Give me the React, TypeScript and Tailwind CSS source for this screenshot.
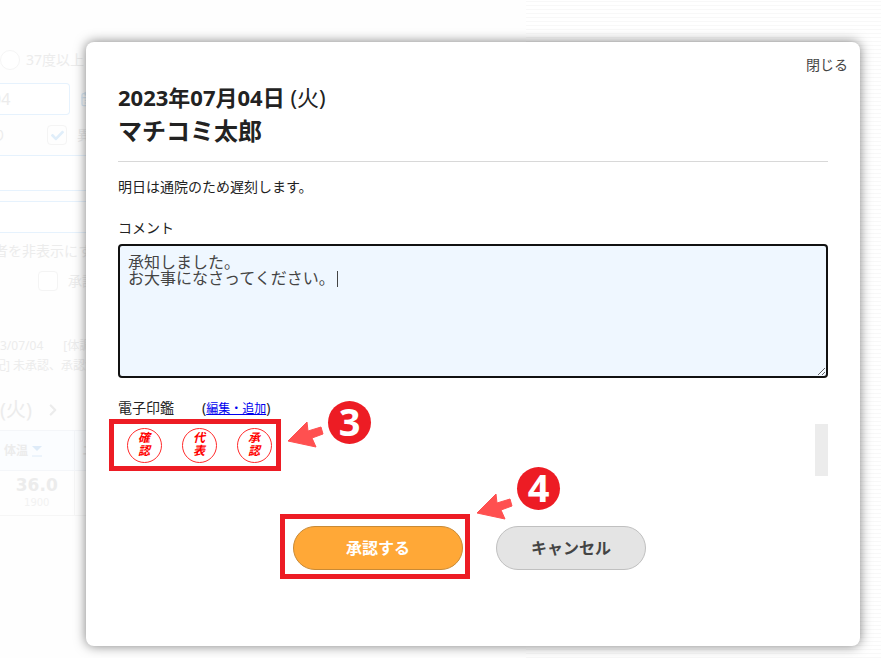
import { useEffect, useRef } from "react";
import { CalendarDays, ChevronRight } from "lucide-react";
import { FaCheck } from "react-icons/fa";

const stamps = ["確認", "代表", "承認"];

function PageBehind() {
    return (
        <div
            inert
            className="min-h-screen bg-[repeating-linear-gradient(to_bottom,#fff_0px,#fff_1px,#f8f8f8_1px,#f8f8f8_2px,#fff_2px,#fff_4px)]"
        >
            <div className="min-h-screen w-[526px] max-w-full bg-[#fefefe] pt-12 text-sm text-[#ececec]">
                <div className="flex h-6 items-center gap-1.5">
                    <span className="size-5 rounded-full border border-[#f5f5f5] bg-white" />
                    <span>37度以上</span>
                </div>
                <div className="mt-[11px] flex items-center gap-2.5">
                    <div className="flex h-8 w-[70px] items-center rounded-r-sm border border-l-0 border-[#e6f2fd] bg-white text-base">
                        <span className="-ml-2">04</span>
                    </div>
                    <CalendarDays size={16} className="text-[#dcebf8]" />
                </div>
                <div className="mt-2 flex h-6 items-center">
                    <span className="-ml-2 w-[55px]">り</span>
                    <span className="mr-2.5 flex size-5 items-center justify-center rounded-sm border border-[#f4f4f4]">
                        <FaCheck size={13} className="text-[#e0eefa]" />
                    </span>
                    <span>異常</span>
                </div>
                <div className="mt-2 h-9 border-y border-[#e6f2fd] bg-white" />
                <div className="mt-2.5 h-8 border-y border-[#e6f2fd] bg-white" />
                <p className="mt-1.5 -ml-1.5 h-6 leading-6">者を非表示にする</p>
                <div className="mt-1.5 flex h-6 items-center gap-2.5 pl-[38px]">
                    <span className="size-5 rounded-sm border border-[#f4f4f4] bg-white" />
                    <span>承認済</span>
                </div>
                <p className="mt-[43px] flex gap-5 text-xs leading-5">
                    <span>3/07/04</span>
                    <span>[体調]</span>
                </p>
                <p className="-ml-1.5 text-xs leading-5">記] 未承認、承認済</p>
                <div className="mt-[18px] flex h-8 items-center gap-3 text-xl">
                    <span>(火)</span>
                    <ChevronRight size={18} strokeWidth={3} />
                </div>
                <table className="mt-1 w-full table-fixed border-collapse">
                    <thead>
                        <tr className="h-10 bg-[#fbfdff] text-xs">
                            <th className="w-[74px] border border-l-0 border-[#f4f6f9]">
                                <span className="flex items-center gap-1 pl-1">
                                    体温
                                    <svg width="10" height="12" viewBox="0 0 10 12" className="text-[#deebf8]">
                                        <path d="M0 1h10L5 6z" fill="currentColor" />
                                        <path d="M0 11h10" stroke="currentColor" />
                                    </svg>
                                </span>
                            </th>
                            <th className="border border-[#f4f6f9] pl-2 text-left">エ</th>
                        </tr>
                    </thead>
                    <tbody>
                        <tr className="h-[45px] text-center">
                            <td className="border border-l-0 border-[#f6f6f6] font-['DejaVu_Sans',sans-serif]">
                                <div className="text-[17px] leading-5 font-bold">36.0</div>
                                <div className="text-[10px] leading-4 text-[#f2f2f2]">1900</div>
                            </td>
                            <td className="border border-[#f6f6f6]" />
                        </tr>
                    </tbody>
                </table>
            </div>
        </div>
    );
}

function StepBadge({ step, className, arrowClassName }: { step: number; className: string; arrowClassName: string }) {
    return (
        <div className={`pointer-events-none absolute flex items-start ${className}`}>
            <svg width="37" height="28" viewBox="0 0 37 28" className={arrowClassName}>
                <path
                    d="M1 20L20 1l1 9 13-4 2 7-11 4 4 9z"
                    fill="#ff5050"
                    stroke="#ff5050"
                    strokeLinejoin="round"
                />
            </svg>
            <span className="ml-1 flex size-[43px] items-center justify-center rounded-full bg-[#ed1c24] pb-1 text-[38px] leading-none font-bold text-white">
                {step}
            </span>
        </div>
    );
}

export default function App() {
    const commentRef = useRef<HTMLTextAreaElement>(null);

    useEffect(() => {
        const el = commentRef.current;
        if (!el) return;
        el.focus();
        el.setSelectionRange(el.value.length, el.value.length);
    }, []);

    return (
        <div className="relative overflow-hidden font-['Noto_Sans','Noto_Sans_CJK_JP',sans-serif] text-[#222]">
            <PageBehind />

            <div className="absolute inset-0 pt-[42px] pr-[21px] pb-3 pl-[86px]">
                <div
                    role="dialog"
                    aria-labelledby="dialog-title"
                    className="flex h-full flex-col rounded-lg bg-white shadow-[0_0_12px_rgba(0,0,0,0.5)]"
                >
                    <div className="flex justify-end pt-[13px] pr-3">
                        <button type="button" className="text-sm text-[#444]">
                            閉じる
                        </button>
                    </div>

                    <div className="px-8 pt-1.5">
                        <header id="dialog-title" className="border-b border-[#d8d8d8] pb-3.5">
                            <p className="text-[22px] leading-8">
                                <span className="font-bold">2023年07月04日</span> (火)
                            </p>
                            <h1 className="mt-0.5 text-2xl leading-8 font-bold">マチコミ太郎</h1>
                        </header>

                        <p className="mt-[15px] text-sm">明日は通院のため遅刻します。</p>

                        <label htmlFor="comment" className="mt-[21px] block text-sm">
                            コメント
                        </label>
                        <div className="relative mt-1.5">
                            <textarea
                                id="comment"
                                ref={commentRef}
                                defaultValue={"承知しました。\nお大事になさってください。"}
                                className="block h-[134px] w-full rounded border-2 border-[#111] bg-[#eff7ff] p-2 text-base leading-4 text-[#444] caret-transparent outline-none"
                            />
                            <span className="pointer-events-none absolute top-[27px] left-[219px] h-4 w-px bg-[#444]" />
                        </div>

                        <div className="mt-5 flex items-center gap-7 text-sm">
                            <span>電子印鑑</span>
                            <span>
                                (
                                <a href="#edit" className="text-xs text-[#0000ee] underline">
                                    編集・追加
                                </a>
                                )
                            </span>
                        </div>

                        <div className="flex items-start justify-between pt-px">
                            <div className="relative -ml-[9px] flex h-[52px] w-[172px] items-center justify-center gap-5 border-5 border-[#ed1c24] pl-2">
                                {stamps.map((stamp) => (
                                    <button
                                        key={stamp}
                                        type="button"
                                        className="flex size-[35px] shrink-0 items-center justify-center rounded-full border border-[#ff2a2a] text-[#f00]"
                                    >
                                        <span className="w-3 font-['Liberation_Serif','Noto_Sans_CJK_JP',serif] text-xs leading-[13px] font-bold break-all italic">
                                            {stamp}
                                        </span>
                                    </button>
                                ))}
                                <StepBadge step={3} className="-top-[23px] left-[173px]" arrowClassName="mt-5" />
                            </div>
                            <div className="mt-[5px] h-[52px] w-[13px] bg-[#ececec]" />
                        </div>
                    </div>

                    <div className="mt-[38px] flex items-start justify-center gap-[26px] pr-5">
                        <div className="relative border-5 border-[#ed1c24] pt-[7px] pr-0.5 pb-1 pl-2">
                            <button
                                type="button"
                                className="block h-11 w-[170px] rounded-full border border-[#c98a35] bg-[#ffa837] text-base font-bold text-white"
                            >
                                承認する
                            </button>
                            <StepBadge step={4} className="-top-[52px] left-[191px]" arrowClassName="mt-[26px]" />
                        </div>
                        <button
                            type="button"
                            className="mt-3 h-11 w-[150px] rounded-full border border-[#c0c0c0] bg-[#e4e4e4] text-base font-bold text-[#444]"
                        >
                            キャンセル
                        </button>
                    </div>
                </div>
            </div>
        </div>
    );
}
